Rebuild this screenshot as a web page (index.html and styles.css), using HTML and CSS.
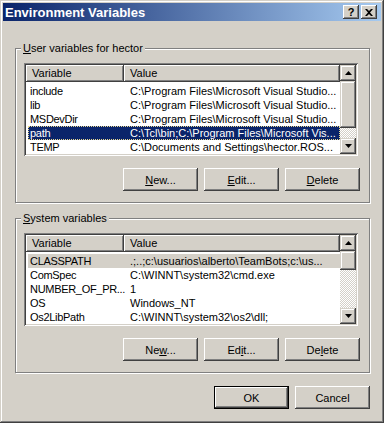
FILE: index.html
```html
<!DOCTYPE html>
<html lang="en">
<head>
    <meta charset="UTF-8">
    <title>Environment Variables</title>
    <link rel="stylesheet" href="styles.css">
</head>
<body>

    <div class="window">
        <div class="titlebar">
            <span class="title">Environment Variables</span>
            <div class="caption-btns">
                <div class="cap-btn help">?</div>
                <div class="cap-btn">
                    <svg width="8" height="7" viewBox="0 0 8 7">
                        <path d="M0 0h2l2 2 2-2h2L5 3.5 8 7H6L4 5 2 7H0l3-3.5z" fill="#000"/>
                    </svg>
                </div>
            </div>
        </div>

        <div class="content">
            <section class="group">
                <div class="group-label"><u>U</u>ser variables for hector</div>
                <div class="listview">
                    <div class="lv-main">
                        <div class="lv-header">
                            <div class="col col-var">Variable</div>
                            <div class="col col-val">Value</div>
                        </div>
                        <div class="lv-row"><span class="c1">include</span><span class="c2">C:\Program Files\Microsoft Visual Studio...</span></div>
                        <div class="lv-row"><span class="c1">lib</span><span class="c2">C:\Program Files\Microsoft Visual Studio...</span></div>
                        <div class="lv-row"><span class="c1">MSDevDir</span><span class="c2">C:\Program Files\Microsoft Visual Studio...</span></div>
                        <div class="lv-row selected focused"><span class="c1">path</span><span class="c2">C:\Tcl\bin;C:\Program Files\Microsoft Vis...</span></div>
                        <div class="lv-row"><span class="c1">TEMP</span><span class="c2">C:\Documents and Settings\hector.ROS...</span></div>
                    </div>
                    <div class="scrollbar">
                        <div class="sb-btn"><svg width="7" height="4" viewBox="0 0 7 4"><path d="M3.5 0L7 4H0z" fill="#000"/></svg></div>
                        <div class="sb-track">
                            <div class="sb-thumb user-thumb"></div>
                        </div>
                        <div class="sb-btn"><svg width="7" height="4" viewBox="0 0 7 4"><path d="M0 0h7L3.5 4z" fill="#000"/></svg></div>
                    </div>
                </div>
                <div class="btn-row">
                    <button class="btn"><u>N</u>ew...</button>
                    <button class="btn"><u>E</u>dit...</button>
                    <button class="btn"><u>D</u>elete</button>
                </div>
            </section>

            <section class="group system">
                <div class="group-label"><u>S</u>ystem variables</div>
                <div class="listview">
                    <div class="lv-main">
                        <div class="lv-header">
                            <div class="col col-var">Variable</div>
                            <div class="col col-val">Value</div>
                        </div>
                        <div class="lv-row selected inactive"><span class="c1">CLASSPATH</span><span class="c2">.;..;c:\usuarios\alberto\TeamBots;c:\us...</span></div>
                        <div class="lv-row"><span class="c1">ComSpec</span><span class="c2">C:\WINNT\system32\cmd.exe</span></div>
                        <div class="lv-row"><span class="c1">NUMBER_OF_PR...</span><span class="c2">1</span></div>
                        <div class="lv-row"><span class="c1">OS</span><span class="c2">Windows_NT</span></div>
                        <div class="lv-row"><span class="c1">Os2LibPath</span><span class="c2">C:\WINNT\system32\os2\dll;</span></div>
                    </div>
                    <div class="scrollbar">
                        <div class="sb-btn"><svg width="7" height="4" viewBox="0 0 7 4"><path d="M3.5 0L7 4H0z" fill="#000"/></svg></div>
                        <div class="sb-track">
                            <div class="sb-thumb system-thumb"></div>
                        </div>
                        <div class="sb-btn"><svg width="7" height="4" viewBox="0 0 7 4"><path d="M0 0h7L3.5 4z" fill="#000"/></svg></div>
                    </div>
                </div>
                <div class="btn-row">
                    <button class="btn">Ne<u>w</u>...</button>
                    <button class="btn">Ed<u>i</u>t...</button>
                    <button class="btn">De<u>l</u>ete</button>
                </div>
            </section>

            <div class="dialog-btns">
                <button class="btn default">OK</button>
                <button class="btn">Cancel</button>
            </div>
        </div>
    </div>

</body>
</html>
```

FILE: styles.css
```css
:root {
    --face: #d4d0c8;
    --shadow: #808080;
    --dark: #404040;
    --light: #ffffff;
    --select: #0a246a;
}

* {
    box-sizing: border-box;
}

body {
    margin: 0;
    background: var(--face);
    font-family: "Liberation Sans", Arial, sans-serif;
    font-size: 11px;
    color: #000;
}

.window {
    width: 384px;
    height: 423px;
    padding: 3px;
    background: var(--face);
    box-shadow: inset -1px -1px var(--dark), inset 1px 1px var(--face),
                inset -2px -2px var(--shadow), inset 2px 2px var(--light);
}

/* title bar */
.titlebar {
    height: 18px;
    display: flex;
    align-items: center;
    padding: 0 4px 0 2px;
    background: linear-gradient(to right, #0a246a, #a6caf0);
    color: #fff;
}

.title {
    flex: 1;
    font-weight: bold;
    font-size: 13px;
}

.caption-btns {
    display: flex;
    gap: 2px;
}

.cap-btn {
    width: 16px;
    height: 14px;
    display: flex;
    align-items: center;
    justify-content: center;
    background: var(--face);
    color: #000;
    font-weight: bold;
    font-size: 11px;
    box-shadow: inset -1px -1px var(--dark), inset 1px 1px var(--light),
                inset -2px -2px var(--shadow), inset 2px 2px var(--face);
}

.content {
    padding: 27px 10px 0 12px;
}

/* group boxes */
.group {
    width: 355px;
    height: 155px;
    border: 1px solid var(--shadow);
    box-shadow: inset 1px 1px var(--light), 1px 1px var(--light);
}

.group.system {
    margin-top: 15px;
}

.group-label {
    width: max-content;
    margin: -7px 0 0 5px;
    padding: 0 2px;
    line-height: 13px;
    background: var(--face);
}

/* list view */
.listview {
    width: 334px;
    height: 93px;
    margin: 8px 0 0 8px;
    padding: 2px;
    display: flex;
    box-shadow: inset 1px 1px var(--shadow), inset -1px -1px var(--light),
                inset 2px 2px var(--dark), inset -2px -2px var(--face);
}

.lv-main {
    flex: 1;
    background: #fff;
    overflow: hidden;
}

.lv-header {
    display: flex;
    height: 17px;
    margin-bottom: 2px;
}

.col {
    height: 17px;
    line-height: 16px;
    background: var(--face);
    padding-left: 6px;
    box-shadow: inset -1px -1px var(--dark), inset 1px 1px var(--light),
                inset -2px -2px var(--shadow);
}

.col-var {
    width: 98px;
}

.col-val {
    flex: 1;
}

.lv-row {
    display: flex;
    height: 14px;
    line-height: 14px;
    margin-left: 2px;
    white-space: nowrap;
}

.c1 {
    width: 96px;
    padding-left: 2px;
    letter-spacing: -0.3px;
}

.c2 {
    padding-left: 6px;
}

.lv-row.selected {
    background: var(--select);
    color: #fff;
}

.lv-row.focused {
    outline: 1px dotted #e8d890;
    outline-offset: -1px;
}

.lv-row.inactive {
    background: var(--face);
    color: #000;
}

/* scrollbar */
.scrollbar {
    width: 16px;
    display: flex;
    flex-direction: column;
}

.sb-btn {
    height: 16px;
    display: flex;
    align-items: center;
    justify-content: center;
    background: var(--face);
    box-shadow: inset -1px -1px var(--dark), inset 1px 1px var(--face),
                inset -2px -2px var(--shadow), inset 2px 2px var(--light);
}

.sb-track {
    flex: 1;
    background: repeating-conic-gradient(#fff 0 25%, var(--face) 0 50%) 0 0 / 2px 2px;
}

.sb-thumb {
    background: var(--face);
    box-shadow: inset -1px -1px var(--dark), inset 1px 1px var(--face),
                inset -2px -2px var(--shadow), inset 2px 2px var(--light);
}

.user-thumb {
    height: 47px;
}

.system-thumb {
    height: 19px;
}

/* buttons */
.btn-row,
.dialog-btns {
    display: flex;
    justify-content: flex-end;
    gap: 6px;
}

.btn-row {
    margin-top: 12px;
    padding-right: 9px;
}

.dialog-btns {
    margin-top: 13px;
    padding-right: 1px;
}

.btn {
    width: 75px;
    height: 23px;
    padding: 0;
    border: none;
    background: var(--face);
    font-family: inherit;
    font-size: 11px;
    color: #000;
    box-shadow: inset -1px -1px var(--dark), inset 1px 1px var(--light),
                inset -2px -2px var(--shadow), inset 2px 2px var(--face);
}

.btn.default {
    border: 1px solid #000;
}
```
